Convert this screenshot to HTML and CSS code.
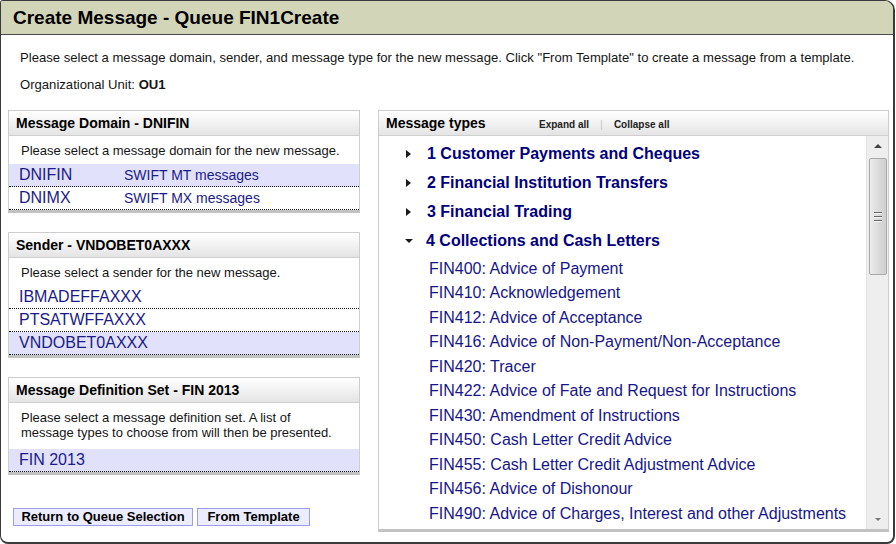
FILE: index.html
```html
<!DOCTYPE html>
<html>
<head>
<meta charset="utf-8">
<link rel="stylesheet" href="styles.css">
</head>
<body>
<div class="frame">
  <div class="titlebar">Create Message - Queue FIN1Create</div>
  <div class="content">
    <p class="intro">Please select a message domain, sender, and message type for the new message. Click "From Template" to create a message from a template.</p>
    <p class="intro org">Organizational Unit: <b>OU1</b></p>
    <div class="columns">
      <div class="left">
        <div class="panel">
          <div class="phead">Message Domain - DNIFIN</div>
          <div class="pdesc">Please select a message domain for the new message.</div>
          <div class="row sel"><span class="code">DNIFIN</span><span class="sub">SWIFT MT messages</span></div>
          <div class="row"><span class="code">DNIMX</span><span class="sub">SWIFT MX messages</span></div>
        </div>
        <div class="panel">
          <div class="phead">Sender - VNDOBET0AXXX</div>
          <div class="pdesc">Please select a sender for the new message.</div>
          <div class="row">IBMADEFFAXXX</div>
          <div class="row">PTSATWFFAXXX</div>
          <div class="row sel">VNDOBET0AXXX</div>
        </div>
        <div class="panel">
          <div class="phead">Message Definition Set - FIN 2013</div>
          <div class="pdesc narrow">Please select a message definition set. A list of message types to choose from will then be presented.</div>
          <div class="row sel">FIN 2013</div>
        </div>
        <div class="buttons">
          <button class="btn b1">Return to Queue Selection</button>
          <button class="btn b2">From Template</button>
        </div>
      </div>
      <div class="right">
        <div class="phead rhead">
          <span class="rtitle">Message types</span>
          <span class="tool">Expand all</span>
          <span class="sep">|</span>
          <span class="tool">Collapse all</span>
        </div>
        <div class="rbody">
          <div class="tree">
            <div class="cat"><span class="tri"></span>1 Customer Payments and Cheques</div>
            <div class="cat"><span class="tri"></span>2 Financial Institution Transfers</div>
            <div class="cat"><span class="tri"></span>3 Financial Trading</div>
            <div class="cat"><span class="tri open"></span>4 Collections and Cash Letters</div>
            <div class="children">
              <div class="item">FIN400: Advice of Payment</div>
              <div class="item">FIN410: Acknowledgement</div>
              <div class="item">FIN412: Advice of Acceptance</div>
              <div class="item">FIN416: Advice of Non-Payment/Non-Acceptance</div>
              <div class="item">FIN420: Tracer</div>
              <div class="item">FIN422: Advice of Fate and Request for Instructions</div>
              <div class="item">FIN430: Amendment of Instructions</div>
              <div class="item">FIN450: Cash Letter Credit Advice</div>
              <div class="item">FIN455: Cash Letter Credit Adjustment Advice</div>
              <div class="item">FIN456: Advice of Dishonour</div>
              <div class="item">FIN490: Advice of Charges, Interest and other Adjustments</div>
            </div>
          </div>
          <div class="sbar">
            <div class="sarrow up"></div>
            <div class="thumb"><span class="grip"></span><span class="grip"></span><span class="grip"></span></div>
            <div class="strack"></div>
            <div class="sarrow down"></div>
          </div>
        </div>
      </div>
    </div>
  </div>
</div>
</body>
</html>
```
FILE: styles.css
```css
html, body {
  margin: 0;
  padding: 0;
  background: #fff;
}
body {
  font-family: "Liberation Sans", Arial, sans-serif;
  color: #111;
}
.frame {
  box-sizing: border-box;
  width: 895px;
  height: 544px;
  border: 1px solid #3a3a3a;
  border-right-width: 2px;
  border-bottom-width: 2px;
  border-radius: 3px 10px 8px 8px;
  overflow: hidden;
  display: flex;
  flex-direction: column;
}
.titlebar {
  height: 33px;
  line-height: 33px;
  background: #d3d5b9;
  border-bottom: 1px solid #4a4a4a;
  padding-left: 12px;
  font-size: 19px;
  font-weight: bold;
  color: #000;
}
.content {
  padding: 0 3px 0 7px;
}
.intro {
  margin: 15px 0 0 12px;
  font-size: 13.1px;
  line-height: 16px;
  color: #151515;
}
.intro.org {
  margin-top: 11px;
}
.columns {
  display: flex;
  gap: 18px;
  margin-top: 17px;
}
.left {
  width: 352px;
  flex: none;
}
.right {
  width: 511px;
  flex: none;
  box-sizing: border-box;
  border: 1px solid #cdcdcd;
  border-bottom: 3px solid #c2c2c2;
  height: 422px;
  display: flex;
  flex-direction: column;
}
.panel {
  border: 1px solid #cdcdcd;
  border-bottom: 3px solid #c2c2c2;
  margin-bottom: 19px;
}
.phead {
  height: 24px;
  line-height: 24px;
  border-bottom: 1px solid #cfcfcf;
  background: linear-gradient(#ffffff, #e4e4e4);
  padding-left: 7px;
  font-size: 14px;
  font-weight: bold;
  color: #000;
}
.pdesc {
  padding: 7px 11px 6px 12px;
  font-size: 13px;
  line-height: 15px;
  color: #151515;
}
.pdesc.narrow {
  padding-right: 19px;
  padding-bottom: 9px;
}
.row {
  height: 22px;
  line-height: 22px;
  border-bottom: 1px dotted #111;
  padding-left: 10px;
  font-size: 16px;
  color: #1a1a8a;
  display: flex;
}
.row.sel {
  background: #e1e1fb;
}
.code {
  width: 105px;
  flex: none;
}
.sub {
  font-size: 14px;
}
.buttons {
  margin-top: 33px;
  margin-left: 5px;
  display: flex;
  gap: 4px;
}
.btn {
  height: 18px;
  padding: 0;
  border: 1px solid #9c9cf0;
  background: #ececff;
  font-family: "Liberation Sans", Arial, sans-serif;
  font-size: 13px;
  font-weight: bold;
  color: #000;
  line-height: 16px;
}
.b1 { width: 180px; }
.b2 { width: 113px; }
.rhead {
  display: flex;
  align-items: baseline;
  flex: none;
}
.rtitle {
  width: 153px;
  flex: none;
  font-size: 14px;
}
.tool {
  font-size: 10px;
  color: #222;
  line-height: 24px;
}
.sep {
  font-size: 11px;
  font-weight: normal;
  color: #c8c8c8;
  margin: 0 11px;
  line-height: 24px;
}
.rbody {
  flex: 1;
  display: flex;
  min-height: 0;
}
.tree {
  flex: 1;
  overflow: hidden;
  padding-top: 3px;
}
.cat {
  height: 29px;
  display: flex;
  align-items: center;
  padding-left: 26px;
  font-size: 16px;
  font-weight: bold;
  color: #00007e;
  white-space: nowrap;
}
.tri {
  width: 0;
  height: 0;
  border-left: 5px solid #1a1a1a;
  border-top: 4px solid transparent;
  border-bottom: 4px solid transparent;
  margin-right: 16px;
  margin-left: 1px;
}
.tri.open {
  border-left: 4px solid transparent;
  border-right: 4px solid transparent;
  border-top: 4px solid #1a1a1a;
  border-bottom: 0;
  margin-left: 0;
  margin-right: 13px;
}
.children {
  padding-top: 1.5px;
}
.item {
  height: 24.5px;
  line-height: 24.5px;
  padding-left: 50px;
  font-size: 16px;
  color: #16168a;
  white-space: nowrap;
}
.sbar {
  width: 21px;
  flex: none;
  background: #eeeeee;
  border-left: 1px solid #e2e2e2;
  display: flex;
  flex-direction: column;
  align-items: center;
}
.sarrow {
  height: 20px;
  flex: none;
  width: 100%;
  display: flex;
  align-items: center;
  justify-content: center;
}
.sarrow.up::after {
  content: "";
  border-left: 4px solid transparent;
  border-right: 4px solid transparent;
  border-bottom: 4px solid #444;
}
.sarrow.down::after {
  content: "";
  border-left: 3px solid transparent;
  border-right: 3px solid transparent;
  border-top: 3px solid #777;
}
.thumb {
  box-sizing: border-box;
  width: 18px;
  height: 117px;
  flex: none;
  margin-top: 2px;
  border: 1px solid #a9a9a9;
  border-radius: 2px;
  background: linear-gradient(to right, #ececec, #d9d9d9 60%, #cfcfcf);
  display: flex;
  flex-direction: column;
  align-items: center;
  justify-content: center;
  gap: 2px;
}
.grip {
  width: 8px;
  height: 1px;
  background: #666;
  border-bottom: 1px solid #f6f6f6;
}
.strack {
  flex: 1;
}
```
